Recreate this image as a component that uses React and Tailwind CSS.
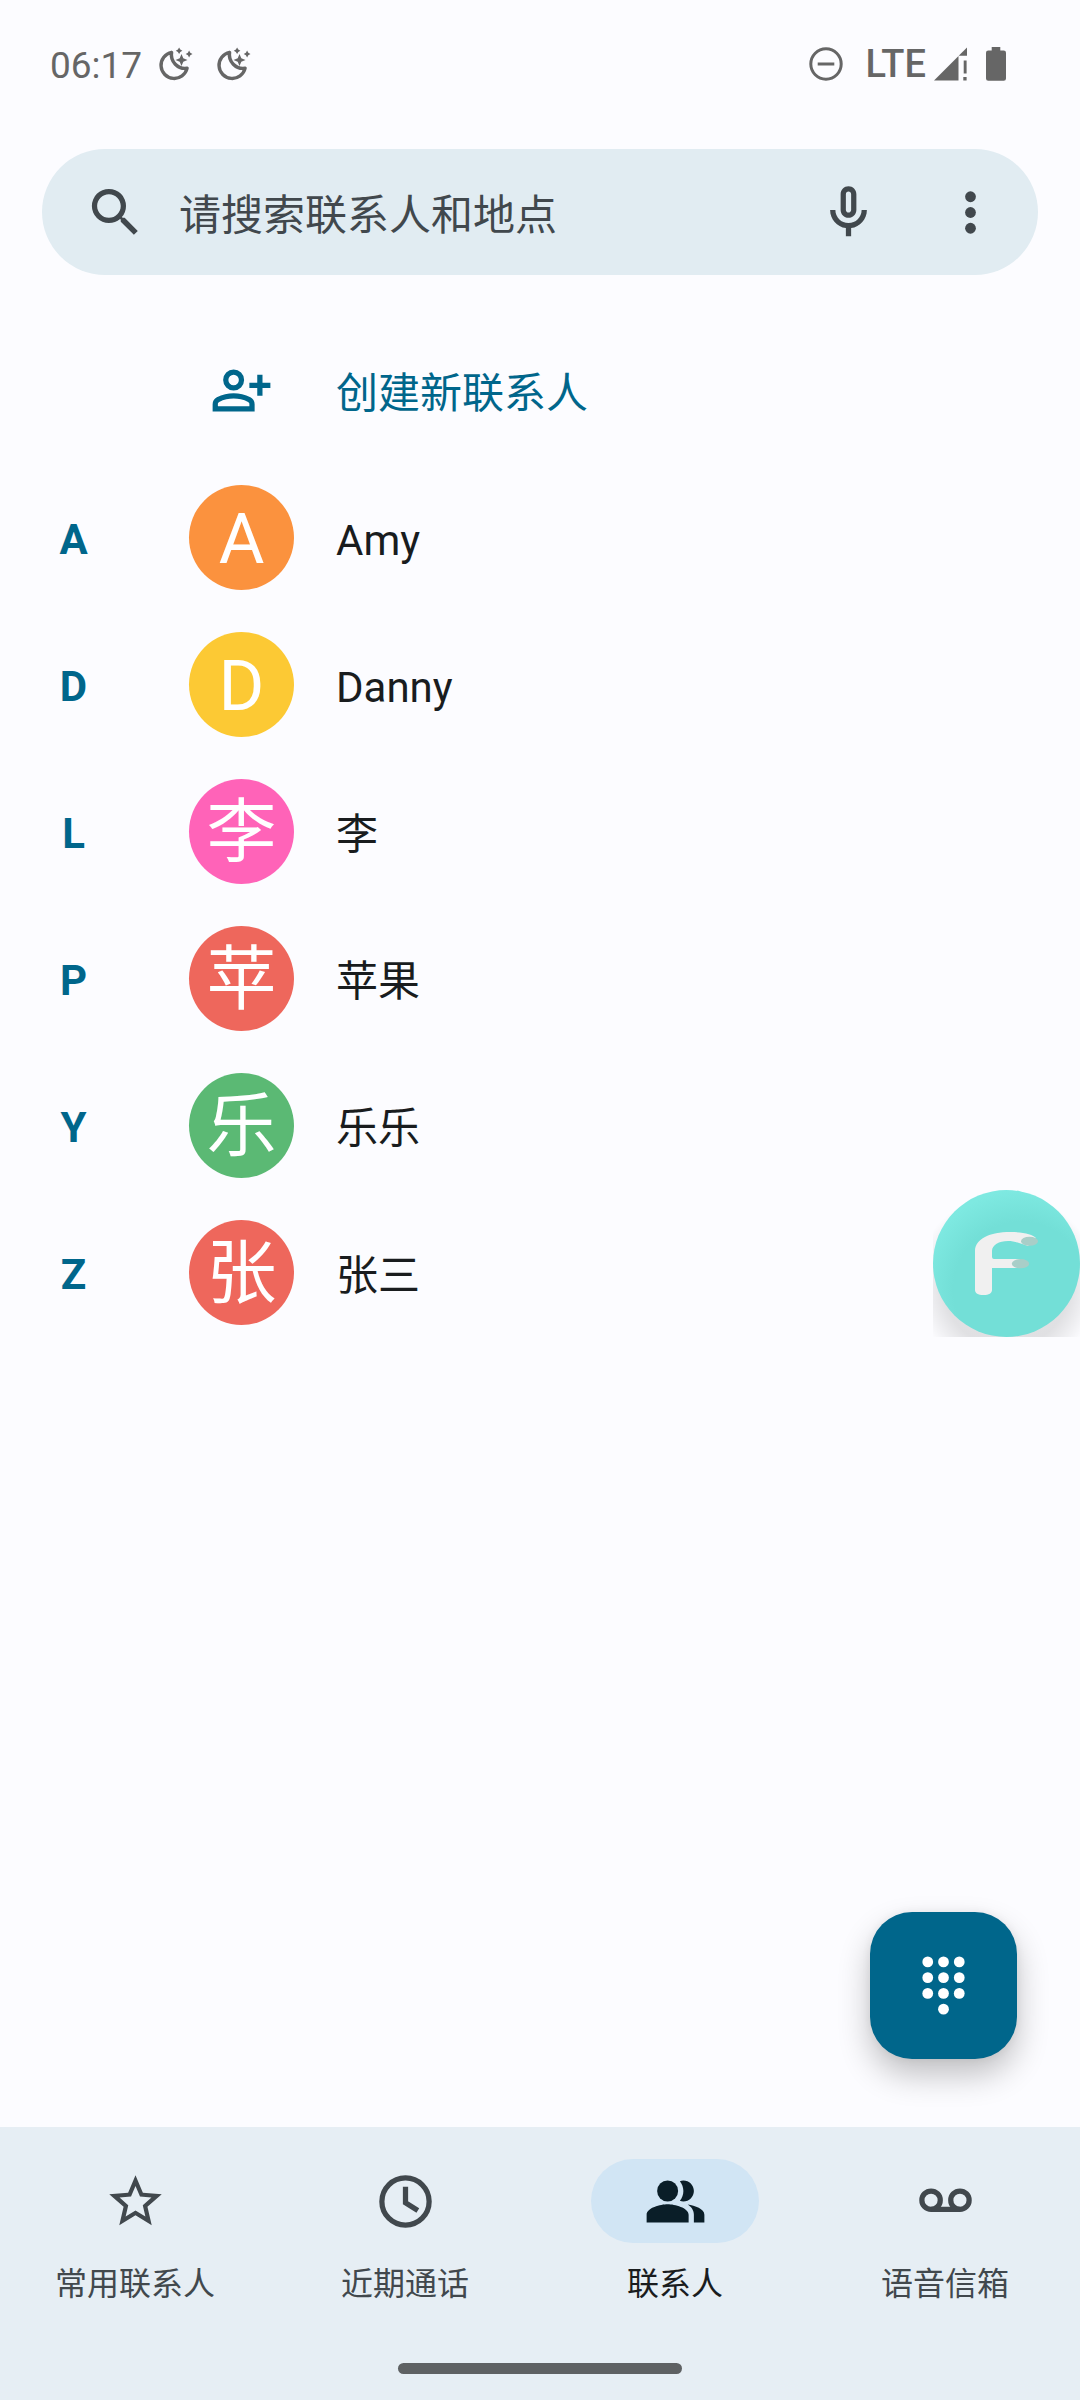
import React from "react";

const contacts = [
  { section: "A", initial: "A", name: "Amy", color: "bg-[#fb923e]" },
  { section: "D", initial: "D", name: "Danny", color: "bg-[#fcc934]" },
  { section: "L", initial: "李", name: "李", color: "bg-[#ff63b8]" },
  { section: "P", initial: "苹", name: "苹果", color: "bg-[#ee675c]" },
  { section: "Y", initial: "乐", name: "乐乐", color: "bg-[#5bb974]" },
  { section: "Z", initial: "张", name: "张三", color: "bg-[#ee675c]" },
];

function Icon({ children }) {
  return (
    <svg viewBox="0 0 24 24" className="size-[63px] shrink-0" fill="currentColor" aria-hidden="true">
      {children}
    </svg>
  );
}

function MoonIcon() {
  return (
    <svg viewBox="0 0 34 34" className="size-[34px]" fill="currentColor" aria-hidden="true">
      <path
        d="M12.6 5.3A13.2 13.2 0 1 0 28.1 21.2A13.7 13.7 0 0 1 12.6 5.3Z"
        fill="none"
        stroke="currentColor"
        strokeWidth="3.4"
        strokeLinejoin="round"
      />
      <path d="M22.500 7l1.800 4.200 4.200 1.800-4.200 1.800-1.800 4.200-1.800-4.200-4.200-1.800 4.200-1.800z" />
      <path d="M20.100.4l1.200 2.100 2.100 1.200-2.100 1.200-1.200 2.100-1.200-2.100-2.100-1.200 2.100-1.200z" />
      <path d="M30.100 3.600l1.200 2.200 2.200 1.200-2.200 1.200-1.200 2.200-1.200-2.200-2.200-1.200 2.200-1.200z" />
    </svg>
  );
}

function StatusBar() {
  return (
    <header className="flex h-[149px] items-start justify-between pt-11 pr-[74px] pl-[50px] text-[#666666]">
      <div className="flex h-[44px] items-center">
        <time className="text-[37px] leading-[44px]">06:17</time>
        <div className="flex gap-6 pb-1 pl-[17px]">
          <MoonIcon />
          <MoonIcon />
        </div>
      </div>
      <div className="flex h-[40px] items-center">
        <svg viewBox="0 0 34 34" className="size-[34px]" aria-label="勿扰" role="img">
          <circle cx="17" cy="17" r="15.2" fill="none" stroke="currentColor" strokeWidth="3" />
          <rect x="8.7" y="15.5" width="16.6" height="3" fill="currentColor" />
        </svg>
        <span className="pl-[22px] text-[38px] leading-[40px] font-medium">LTE</span>
        <svg viewBox="0 0 34 34" className="ml-2 size-[34px]" fill="currentColor" aria-hidden="true">
          <path d="M0 33.5L24.5 9v24.5z" />
          <path d="M33 .5v8.3h-8.3z" />
          <rect x="29.7" y="13.5" width="2.9" height="13" />
          <rect x="29.3" y="30" width="3.3" height="3.5" />
        </svg>
        <svg viewBox="0 0 20 34" className="ml-[18px] h-[34px] w-[20px]" fill="currentColor" aria-hidden="true">
          <path d="M5.7 0h8.6v3.5h3.4q2.3 0 2.3 2.3v25.7q0 2.3-2.3 2.3H2.3q-2.3 0-2.3-2.3V5.8q0-2.3 2.3-2.3h3.4z" />
        </svg>
      </div>
    </header>
  );
}

function SearchBar() {
  return (
    <form
      role="search"
      onSubmit={(e) => e.preventDefault()}
      className="mx-[42px] flex h-[126px] items-center rounded-full bg-[#e1ecf2] pr-9 pl-[42px] text-[#41484d]"
    >
      <label htmlFor="search" aria-label="搜索">
        <Icon>
          <path d="M15.5 14h-.79l-.28-.27A6.471 6.471 0 0 0 16 9.5 6.5 6.5 0 1 0 9.5 16c1.61 0 3.09-.59 4.23-1.57l.27.28v.79l5 4.99L20.49 19l-4.99-5zm-6 0C7.01 14 5 11.99 5 9.5S7.01 5 9.5 5 14 7.01 14 9.5 11.99 14 9.5 14z" />
        </Icon>
      </label>
      <input
        id="search"
        type="text"
        placeholder="请搜索联系人和地点"
        className="ml-8 h-[70px] min-w-0 flex-1 bg-transparent pt-1.5 text-[42px] leading-[64px] outline-none placeholder:text-[#41484d]"
      />
      <button type="button" aria-label="语音搜索">
        <Icon>
          <path d="M12 14c1.66 0 3-1.34 3-3V5c0-1.66-1.34-3-3-3S9 3.34 9 5v6c0 1.66 1.34 3 3 3zm-1-9c0-.55.45-1 1-1s1 .45 1 1v6c0 .55-.45 1-1 1s-1-.45-1-1V5zm6 6c0 2.76-2.24 5-5 5s-5-2.24-5-5H5c0 3.53 2.61 6.43 6 6.92V21h2v-3.08c3.39-.49 6-3.39 6-6.92h-2z" />
        </Icon>
      </button>
      <button type="button" aria-label="更多选项" className="ml-[59px]">
        <Icon>
          <circle cx="12" cy="6" r="2.05" />
          <circle cx="12" cy="12" r="2.05" />
          <circle cx="12" cy="18" r="2.05" />
        </Icon>
      </button>
    </form>
  );
}

function ContactList() {
  return (
    <ul className="pt-[42px]">
      <li>
        <button type="button" className="flex h-[147px] w-full items-center pl-[210px] text-left text-[#00668b]">
          <Icon>
            <path d="M18 14v-3h-3V9h3V6h2v3h3v2h-3v3h-2Zm-9-2q-1.650 0-2.825-1.175Q5 9.650 5 8t1.175-2.825Q7.350 4 9 4t2.825 1.175Q13 6.350 13 8t-1.175 2.825Q10.650 12 9 12Zm-8 8v-2.800q0-.85.438-1.563.437-.712 1.162-1.087 1.550-.775 3.150-1.163Q7.350 13 9 13t3.250.387q1.600.388 3.150 1.163.725.375 1.162 1.087Q17 16.350 17 17.200V20H1Zm2-2h12v-.8q0-.275-.137-.5-.138-.225-.363-.35-1.350-.675-2.725-1.013Q10.400 15 9 15t-2.775.337Q4.850 15.675 3.500 16.350q-.225.125-.362.35-.138.225-.138.5V18Zm6-8q.825 0 1.413-.588Q11 8.825 11 8t-.587-1.412Q9.825 6 9 6q-.825 0-1.412.588Q7 7.175 7 8t.588 1.412Q8.175 10 9 10Z" />
          </Icon>
          <span className="pt-1.5 pl-[63px] text-[42px] leading-[64px]">创建新联系人</span>
        </button>
      </li>
      {contacts.map((c) => (
        <li key={c.section}>
          <button type="button" className="flex h-[147px] w-full items-center text-left">
            <span className="w-[147px] pt-1 text-center text-[42px] leading-[64px] font-bold text-[#00668b]">
              {c.section}
            </span>
            <span
              className={`ml-[42px] flex size-[105px] shrink-0 items-center justify-center rounded-full pt-1 text-[70px] leading-[101px] text-white ${c.color}`}
              aria-hidden="true"
            >
              {c.initial}
            </span>
            <span className="pt-1.5 pl-[42px] text-[42px] leading-[64px] text-[#191c1e]">{c.name}</span>
          </button>
        </li>
      ))}
    </ul>
  );
}

function FloatingAssist() {
  return (
    <button type="button" aria-label="悬浮助手" className="absolute top-[1190px] right-0 size-[147px] overflow-hidden">
      <svg viewBox="0 0 147 147" className="size-full" aria-hidden="true">
        <defs>
          <radialGradient id="disc" cx="0.6" cy="0.68" r="0.68">
            <stop offset="0" stopColor="#73dfd7" />
            <stop offset="0.68" stopColor="#73dfd7" />
            <stop offset="1" stopColor="#7ee9e1" />
          </radialGradient>
          <radialGradient id="shade" cx="0.5" cy="0.64" r="0.62">
            <stop offset="0.7" stopColor="#000" stopOpacity="0.11" />
            <stop offset="1" stopColor="#000" stopOpacity="0" />
          </radialGradient>
        </defs>
        <rect width="147" height="147" fill="url(#shade)" />
        <circle cx="73.5" cy="73.5" r="73.5" fill="url(#disc)" />
        <path
          d="M42 61C42 49 57 42 77 42C90 42 100 44.5 103 48L95 56C89 54 82 51 75 51C66 51 59 55 59 61V67Q59 69 61 69H87V78H59V100C59 103 56 105 50.5 105S42 103 42 100Z"
          fill="#f0f0f0"
        />
        <ellipse cx="96.500" cy="51.300" rx="8.500" ry="4.500" fill="#a9cec8" />
        <ellipse cx="87.500" cy="73.700" rx="8.700" ry="4.600" fill="#a9cec8" />
      </svg>
    </button>
  );
}

function DialpadButton() {
  return (
    <button
      type="button"
      aria-label="拨号键盘"
      className="absolute right-[63px] bottom-[68px] flex size-[147px] items-center justify-center rounded-[42px] bg-[#00668b] text-white shadow-[0_16px_32px_rgba(0,0,0,0.24),0_0_10px_rgba(0,0,0,0.06)]"
    >
      <Icon>
        {[3, 9, 15].map((y) => [6, 12, 18].map((x) => <circle key={`${x}-${y}`} cx={x} cy={y} r="2.05" />))}
        <circle cx="12" cy="21" r="2.05" />
      </Icon>
    </button>
  );
}

const tabs = [
  {
    label: "常用联系人",
    icon: (
      <path d="M22 9.24l-7.19-.62L12 2 9.19 8.63 2 9.24l5.46 4.73L5.82 21 12 17.27 18.18 21l-1.63-7.03L22 9.24zM12 15.4l-3.76 2.27 1-4.28-3.32-2.88 4.38-.38L12 6.1l1.71 4.04 4.38.38-3.32 2.88 1 4.28L12 15.4z" />
    ),
  },
  {
    label: "近期通话",
    icon: (
      <g fill="none" stroke="currentColor" strokeWidth="2">
        <circle cx="12" cy="12" r="9" />
        <path d="M12 6.4V12.5L16.7 15.4" />
      </g>
    ),
  },
  {
    label: "联系人",
    active: true,
    icon: (
      <>
        <path d="M16.67 13.13C18.04 14.06 19 15.32 19 17v3h4v-3c0-2.18-3.57-3.47-6.33-3.87z" />
        <circle cx="9" cy="8" r="4" />
        <path d="M15 12c2.21 0 4-1.79 4-4s-1.79-4-4-4c-.47 0-.91.1-1.33.24C14.5 5.27 15 6.58 15 8s-.5 2.73-1.33 3.76c.42.14.86.24 1.33.24zM9 13c-2.67 0-8 1.34-8 4v3h16v-3c0-2.66-5.33-4-8-4z" />
      </>
    ),
  },
  {
    label: "语音信箱",
    icon: (
      <g fill="none" stroke="currentColor" strokeWidth="2">
        <circle cx="6.5" cy="11.5" r="3.5" />
        <circle cx="17.5" cy="11.5" r="3.5" />
        <path d="M6.5 15h11" />
      </g>
    ),
  },
];

function BottomNav() {
  return (
    <footer className="bg-[#e6eef4] pt-8 pb-[26px]">
      <nav className="grid grid-cols-4">
        {tabs.map((t) => (
          <a
            key={t.label}
            href="#"
            aria-current={t.active ? "page" : undefined}
            className={`flex flex-col items-center ${t.active ? "text-[#191c1e]" : "text-[#41484d]"}`}
          >
            <span
              className={`flex h-[84px] w-[168px] items-center justify-center rounded-full ${
                t.active ? "bg-[#d1e5f4] text-[#0a1e28]" : ""
              }`}
            >
              <Icon>{t.icon}</Icon>
            </span>
            <span className="pt-[17px] text-[32px] leading-[48px]">{t.label}</span>
          </a>
        ))}
      </nav>
      <div className="mx-auto mt-[55px] h-[11px] w-[284px] rounded-full bg-[#5e6163]" />
    </footer>
  );
}

export default function App() {
  return (
    <div className="relative flex min-h-screen flex-col bg-[#fcfcff] font-[Roboto,'Noto_Sans_CJK_SC',sans-serif]">
      <StatusBar />
      <main className="relative flex-1">
        <SearchBar />
        <ContactList />
        <DialpadButton />
      </main>
      <BottomNav />
      <FloatingAssist />
    </div>
  );
}
